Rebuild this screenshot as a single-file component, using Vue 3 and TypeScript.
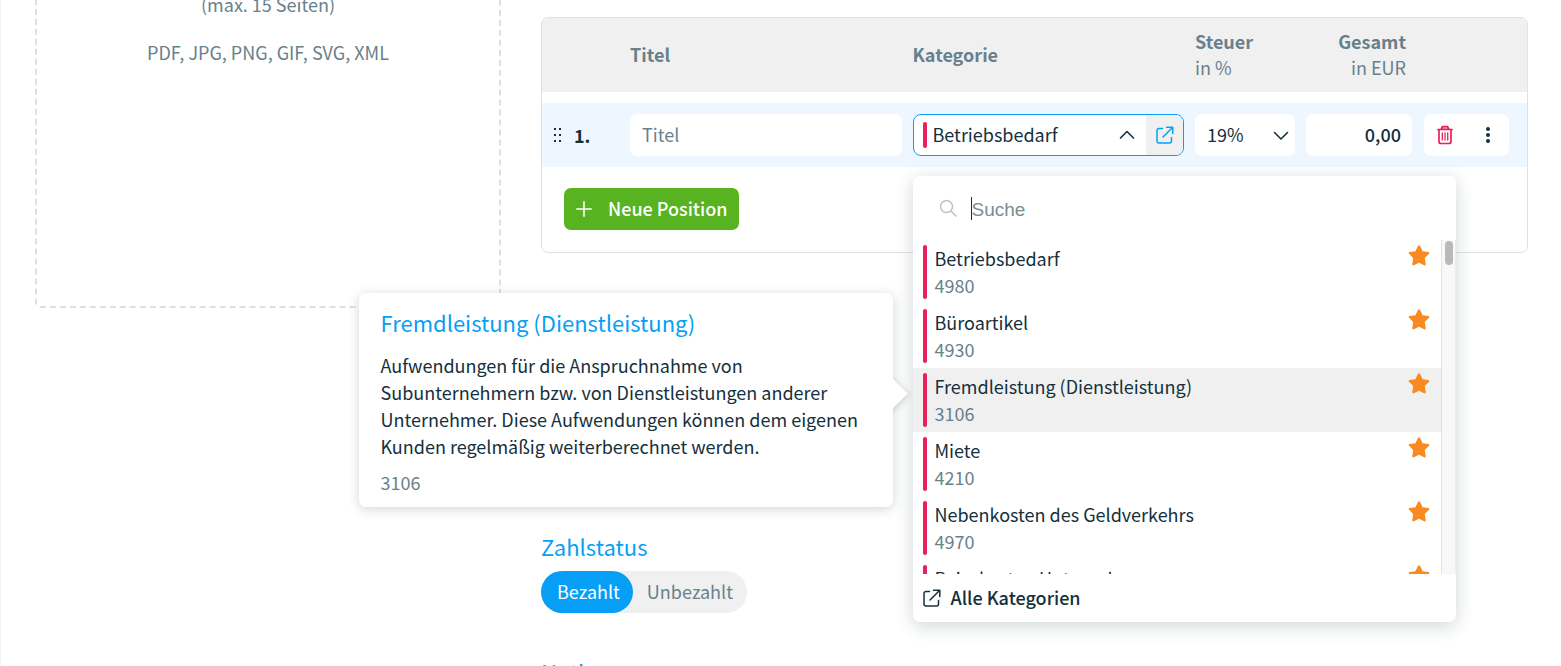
<script setup lang="ts">
import { ref } from 'vue'

interface Category {
  name: string
  code?: string
}

const categories: Category[] = [
  { name: 'Betriebsbedarf', code: '4980' },
  { name: 'Büroartikel', code: '4930' },
  { name: 'Fremdleistung (Dienstleistung)', code: '3106' },
  { name: 'Miete', code: '4210' },
  { name: 'Nebenkosten des Geldverkehrs', code: '4970' },
  { name: 'Reisekosten Unternehmer' },
]

const selected = ref('Betriebsbedarf')
const highlighted = ref('Fremdleistung (Dienstleistung)')
const title = ref('')
const search = ref('')
const tax = ref('19%')
const total = ref('0,00')
const payment = ref('Bezahlt')
</script>

<template>
  <main class="page">
    <section class="dropzone">
      <p>(max. 15 Seiten)</p>
      <p>PDF, JPG, PNG, GIF, SVG, XML</p>
    </section>

    <div class="content">
      <section class="positions">
        <table>
          <colgroup>
            <col class="col-number" />
            <col />
            <col />
            <col class="col-tax" />
            <col class="col-total" />
            <col class="col-actions" />
          </colgroup>
          <thead>
            <tr>
              <th></th>
              <th>Titel</th>
              <th>Kategorie</th>
              <th>Steuer<br /><span>in %</span></th>
              <th class="th-total">Gesamt<br /><span>in EUR</span></th>
              <th></th>
            </tr>
          </thead>
          <tbody>
            <tr class="spacer"><td colspan="6"></td></tr>
            <tr class="row">
              <td>
                <div class="number">
                  <svg width="8" height="14" viewBox="0 0 8 14" fill="currentColor">
                    <rect x="0" y="0" width="2" height="2" /><rect x="5" y="0" width="2" height="2" />
                    <rect x="0" y="6" width="2" height="2" /><rect x="5" y="6" width="2" height="2" />
                    <rect x="0" y="12" width="2" height="2" /><rect x="5" y="12" width="2" height="2" />
                  </svg>
                  <span>1.</span>
                </div>
              </td>
              <td>
                <input v-model="title" class="field" type="text" placeholder="Titel" aria-label="Titel" />
              </td>
              <td>
                <div class="category">
                  <div class="combo">
                    <button class="combo-value" type="button" aria-expanded="true">
                      <i class="bar"></i>
                      <span>{{ selected }}</span>
                      <svg class="chevron" width="16" height="10" viewBox="0 0 16 10" fill="none" stroke="currentColor" stroke-width="1.6" stroke-linecap="round" stroke-linejoin="round">
                        <path d="M1.5 8 8 1.5 14.5 8" />
                      </svg>
                    </button>
                    <button class="combo-open" type="button" aria-label="Kategorie öffnen">
                      <svg width="18" height="18" viewBox="0 0 18 18" fill="none" stroke="currentColor" stroke-width="1.5" stroke-linecap="round" stroke-linejoin="round">
                        <path d="M6.500 2.500H3a2 2 0 0 0-2 2V15a2 2 0 0 0 2 2h10.500a2 2 0 0 0 2-2v-3.500M10.500 1.200h6.300v6.300M16.500 1.500 7 11" />
                      </svg>
                    </button>
                  </div>

                  <div class="menu">
                    <label class="search">
                      <svg width="18" height="18" viewBox="0 0 18 18" fill="none" stroke="currentColor" stroke-width="1.5" stroke-linecap="round">
                        <circle cx="7.5" cy="7.5" r="6" /><path d="m12 12 5 5" />
                      </svg>
                      <i class="caret"></i>
                      <input v-model="search" type="text" placeholder="Suche" aria-label="Suche" />
                    </label>
                    <div class="list">
                      <ul>
                        <li v-for="c in categories" :key="c.name" :class="{ active: c.name === highlighted }" @mouseenter="highlighted = c.name">
                          <button type="button" class="option" @click="selected = c.name">
                            <i class="bar"></i>
                            <span class="label">
                              <span>{{ c.name }}</span>
                              <span v-if="c.code" class="code">{{ c.code }}</span>
                            </span>
                            <svg class="star" width="22" height="21" viewBox="0 0 22 21" fill="currentColor">
                              <path d="M9.900 1.100Q11 -.6 12.100 1.100L14.600 6.300 20.300 7.100Q22 7.600 20.800 9L16.800 13 17.700 18.900Q17.700 20.800 16.100 20.300L11 17.700 5.900 20.300Q4.300 20.800 4.300 18.900L5.200 13 1.200 9Q0 7.600 1.700 7.100L7.400 6.300Z" />
                            </svg>
                          </button>
                        </li>
                      </ul>
                      <div class="track" aria-hidden="true"><i class="thumb"></i></div>
                    </div>
                    <a class="all" href="#">
                      <svg width="18" height="18" viewBox="0 0 18 18" fill="none" stroke="currentColor" stroke-width="1.5" stroke-linecap="round" stroke-linejoin="round">
                        <path d="M6.500 2.500H3a2 2 0 0 0-2 2V15a2 2 0 0 0 2 2h10.500a2 2 0 0 0 2-2v-3.500M10.500 1.200h6.300v6.300M16.500 1.500 7 11" />
                      </svg>
                      <span>Alle Kategorien</span>
                    </a>

                    <aside class="tooltip">
                      <h3>Fremdleistung (Dienstleistung)</h3>
                      <p>
                        Aufwendungen für die Anspruchnahme von Subunternehmern bzw. von
                        Dienstleistungen anderer Unternehmer. Diese Aufwendungen können dem
                        eigenen Kunden regelmäßig weiterberechnet werden.
                      </p>
                      <p class="code">3106</p>
                    </aside>
                  </div>
                </div>
              </td>
              <td>
                <div class="select">
                  <select v-model="tax" class="field" aria-label="Steuer in %">
                    <option>19%</option>
                    <option>7%</option>
                    <option>0%</option>
                  </select>
                  <svg class="chevron" width="16" height="10" viewBox="0 0 16 10" fill="none" stroke="currentColor" stroke-width="1.6" stroke-linecap="round" stroke-linejoin="round">
                    <path d="M1.500 1.500 8 8l6.500-6.500" />
                  </svg>
                </div>
              </td>
              <td>
                <input v-model="total" class="field total" type="text" aria-label="Gesamt in EUR" />
              </td>
              <td>
                <div class="actions">
                  <button type="button" class="delete" aria-label="Löschen">
                    <svg width="16" height="20" viewBox="0 0 16 20" fill="none" stroke="currentColor" stroke-width="1.7" stroke-linecap="round" stroke-linejoin="round">
                      <path d="M.9 4.500h14.200M2 4.500V16.500a2 2 0 0 0 2 2h8a2 2 0 0 0 2-2V4.500M4.300 4 5.600 1.500h4.800L11.700 4" />
                      <path d="M5.300 8v7M8 8v7M10.700 8v7" stroke-width="1.3" />
                      <path d="M5 3h6" stroke-width="2" opacity=".5" />
                    </svg>
                  </button>
                  <button type="button" aria-label="Mehr">
                    <svg width="6" height="18" viewBox="0 0 6 18" fill="currentColor">
                      <circle cx="3" cy="3" r="2" /><circle cx="3" cy="9" r="2" /><circle cx="3" cy="15" r="2" />
                    </svg>
                  </button>
                </div>
              </td>
            </tr>
          </tbody>
        </table>
        <div class="footer">
          <button type="button" class="add">
            <svg width="16" height="16" viewBox="0 0 16 16" fill="none" stroke="currentColor" stroke-width="1.6" stroke-linecap="round">
              <path d="M8 .8v14.400M.8 8h14.400" />
            </svg>
            <span>Neue Position</span>
          </button>
        </div>
      </section>

      <fieldset class="status">
        <legend>Zahlstatus</legend>
        <div class="toggle">
          <label v-for="p in ['Bezahlt', 'Unbezahlt']" :key="p" :class="{ on: payment === p }">
            <input v-model="payment" type="radio" name="payment" :value="p" />
            <span>{{ p }}</span>
          </label>
        </div>
      </fieldset>

      <h2 class="next">Notiz</h2>
    </div>
  </main>
</template>

<style>
html,
body {
  margin: 0;
  height: 100%;
  overflow: hidden;
}
</style>

<style scoped>
.page,
.page * {
  box-sizing: border-box;
}
.page {
  display: grid;
  grid-template-columns: minmax(0, 466fr) minmax(0, 987fr);
  align-items: start;
  gap: 40px;
  height: 100vh;
  overflow: hidden;
  padding: 0 33px 0 34px;
  border-left: 1px solid #eff5fb;
  background: #fff;
  color: #14303c;
  font: 18px/27px "Noto Sans CJK SC", "Source Sans Pro", sans-serif;
}
p,
h2,
h3,
ul {
  margin: 0;
  padding: 0;
}
svg {
  flex: none;
}
button,
input,
select {
  border: 0;
  margin: 0;
  padding: 0;
  background: none;
  color: inherit;
  font: inherit;
}
.dropzone {
  margin-top: -34px;
  height: 342px;
  padding-top: 23px;
  border: 2px dashed #dce0e3;
  border-radius: 6px;
  color: #67818c;
  text-align: center;
}
.dropzone p + p {
  margin-top: 21px;
}
.content {
  padding-top: 17px;
}
.positions {
  border: 1px solid #dfe1e3;
  border-radius: 7px;
}
table {
  width: 100%;
  table-layout: fixed;
  border-collapse: separate;
  border-spacing: 0;
}
.col-number {
  width: 88px;
}
.col-tax {
  width: 111px;
}
.col-total {
  width: 118px;
}
.col-actions {
  width: 103px;
}
th {
  height: 74px;
  padding: 0 0 2px;
  background: #f0f0f0;
  color: #67818c;
  font-weight: 700;
  line-height: 26px;
  text-align: left;
}
th span {
  font-weight: 400;
}
th:first-child {
  border-top-left-radius: 6px;
}
th:last-child {
  border-top-right-radius: 6px;
}
.th-total {
  padding-right: 18px;
  text-align: right;
}
td {
  padding: 0;
}
.spacer td {
  height: 11px;
}
.row td {
  padding: 11px 11px 11px 0;
  background: #eef7ff;
}
.row td:nth-child(5) {
  padding-right: 12px;
}
.row td:last-child {
  padding-right: 18px;
}
.number {
  display: flex;
  align-items: center;
  gap: 12px;
  padding-left: 12px;
  font-weight: 700;
}
.field {
  display: block;
  width: 100%;
  height: 42px;
  padding: 0 12px 2px;
  border-radius: 7px;
  background: #fff;
}
.field::placeholder {
  color: #67818c;
  opacity: 1;
}
.total {
  padding-right: 11px;
  font-weight: 500;
  text-align: right;
}
.select {
  position: relative;
}
.select select {
  appearance: none;
}
.select .chevron {
  position: absolute;
  right: 6px;
  top: 17px;
  pointer-events: none;
}
.bar {
  flex: none;
  width: 4px;
  border-radius: 2px;
  background: #e8215d;
}
.category {
  position: relative;
}
.combo {
  display: flex;
  height: 42px;
  overflow: hidden;
  border: 1px solid #069ff5;
  border-radius: 8px;
  background: #fff;
}
.combo-value {
  flex: 1;
  display: flex;
  align-items: center;
  gap: 6px;
  padding: 0 11px 0 9px;
  text-align: left;
}
.combo-value span {
  padding-bottom: 2px;
}
.combo-value .bar {
  height: 26px;
}
.combo-value .chevron {
  margin-left: auto;
}
.combo-open {
  display: flex;
  align-items: center;
  justify-content: center;
  width: 37px;
  background: #f0f0f0;
  color: #069ff5;
}
.menu {
  position: absolute;
  z-index: 2;
  top: calc(100% + 20px);
  left: 0;
  width: 543px;
  border-radius: 7px;
  background: #fff;
  box-shadow: 0 4px 18px rgba(20, 48, 60, 0.2);
}
.search {
  display: flex;
  align-items: center;
  height: 64px;
  padding: 0 26px;
  color: #b9c2c6;
}
.caret {
  width: 1px;
  height: 23px;
  margin-left: 14px;
  background: #14303c;
}
.search input {
  flex: 1;
  height: 32px;
  padding-top: 3px;
  outline: 0;
  color: #14303c;
  font: 19px "Liberation Sans", Arial, sans-serif;
}
.search input::placeholder {
  color: #7c8d95;
  opacity: 1;
}
.list {
  display: flex;
  height: 334px;
  overflow: hidden;
}
ul {
  flex: 1;
  list-style: none;
}
.active {
  background: #f0f0f0;
}
.option {
  display: flex;
  width: 100%;
  height: 64px;
  padding: 5px 11px 5px 10px;
  text-align: left;
}
.label {
  flex: 1;
  display: flex;
  flex-direction: column;
  padding-left: 8px;
}
.code {
  color: #67818c;
}
.star {
  color: #f68b1f;
}
.track {
  width: 15px;
  padding: 1px 3px;
  border-left: 1px solid #e2e2e2;
  border-right: 1px solid #ececec;
  background: #f8f8f8;
}
.thumb {
  display: block;
  width: 8px;
  height: 24px;
  border-radius: 4px;
  background: #b9b9b9;
}
.all {
  display: flex;
  align-items: center;
  gap: 10px;
  height: 48px;
  padding: 0 10px;
  color: inherit;
  font-weight: 500;
  text-decoration: none;
}
.all span,
.add span,
.toggle span {
  padding-bottom: 2px;
}
.tooltip {
  position: absolute;
  top: 117px;
  right: calc(100% + 20px);
  width: 534px;
  padding: 13px 22px 11px;
  border-radius: 7px;
  background: #fff;
  box-shadow: 0 2px 12px rgba(20, 48, 60, 0.2);
}
.tooltip::before {
  content: "";
  position: absolute;
  top: 89px;
  right: -10px;
  width: 23px;
  height: 23px;
  background: #fff;
  box-shadow: 2px 0 6px rgba(20, 48, 60, 0.18);
  transform: rotate(45deg);
}
.tooltip::after {
  content: "";
  position: absolute;
  top: 76px;
  right: 0;
  width: 24px;
  height: 48px;
  background: #fff;
}
.tooltip h3 {
  margin-bottom: 14px;
}
.tooltip .code {
  margin-top: 9px;
}
h2,
h3,
legend {
  color: #069ff5;
  font-size: 22px;
  font-weight: 400;
  line-height: 32px;
}
.actions {
  display: flex;
  height: 42px;
  border-radius: 7px;
  background: #fff;
}
.actions button {
  flex: 1;
  display: flex;
  align-items: center;
  justify-content: center;
}
.actions .delete {
  color: #e8215d;
}
.footer {
  padding: 21px 22px 22px;
}
.add {
  display: flex;
  align-items: center;
  gap: 16px;
  height: 42px;
  padding: 0 12px;
  border-radius: 7px;
  background: #57b320;
  color: #fff;
  font-weight: 500;
}
.status {
  margin: 277px 0 0;
  padding: 0;
  border: 0;
}
legend {
  padding: 0;
}
.toggle {
  display: inline-flex;
  height: 42px;
  margin-top: 9px;
  border-radius: 21px;
  background: #f0f0f0;
  color: #67818c;
}
.toggle label {
  display: flex;
  align-items: center;
  padding: 0 14px;
  border-radius: 21px;
}
.toggle label:first-child {
  padding: 0 13px 0 16px;
}
.toggle .on {
  background: #069ff5;
  color: #fff;
}
.toggle input {
  position: absolute;
  opacity: 0;
}
.next {
  margin-top: 42px;
}
</style>
